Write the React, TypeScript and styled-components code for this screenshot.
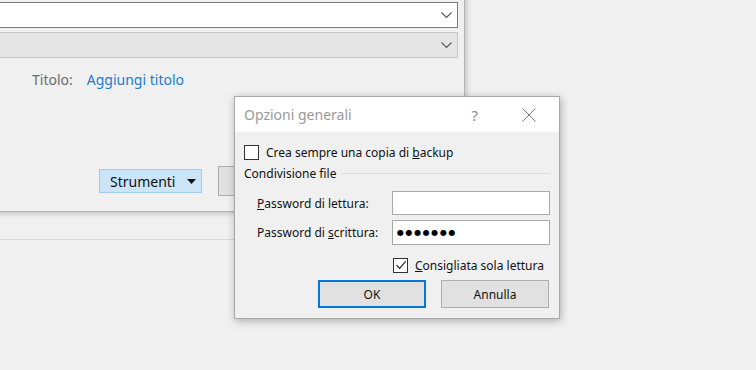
import styled, { createGlobalStyle } from 'styled-components';

const GlobalStyle = createGlobalStyle`
  html, body {
    margin: 0;
    padding: 0;
    background: #f0f0f0;
    font-family: 'Noto Sans', 'Open Sans', sans-serif;
  }
`;

const Chevron = () => (
  <svg width="11" height="7" viewBox="0 0 11 7">
    <polyline points="0.5,0.5 5.5,5.5 10.5,0.5" fill="none" stroke="#555" strokeWidth="1.1" />
  </svg>
);

const Caret = () => (
  <svg width="9" height="5" viewBox="0 0 9 5">
    <polygon points="0,0 9,0 4.5,5" fill="#111" />
  </svg>
);

const CloseIcon = () => (
  <svg width="14" height="14" viewBox="0 0 14 14">
    <path d="M0.5 0.5 L13.5 13.5 M13.5 0.5 L0.5 13.5" stroke="#777" strokeWidth="1" />
  </svg>
);

const Tick = () => (
  <svg width="12" height="12" viewBox="0 0 12 12">
    <polyline points="1.5,6.2 4.6,9.3 10.6,2.4" fill="none" stroke="#222" strokeWidth="1.2" />
  </svg>
);

const App = () => {
  return (
    <>
      <GlobalStyle />
      <Desktop>
        <Separator />

        <BackWindow>
          <Combo $tone="white">
            <Chevron />
          </Combo>
          <Combo $tone="grey">
            <Chevron />
          </Combo>
          <TitleRow>
            <FieldLabel>Titolo:</FieldLabel>
            <LinkText>Aggiungi titolo</LinkText>
          </TitleRow>
          <ButtonRow>
            <ToolsButton>
              <span>Strumenti</span>
              <Caret />
            </ToolsButton>
            <GreyButton />
          </ButtonRow>
        </BackWindow>

        <Dialog>
          <TitleBar>
            <DialogTitle>Opzioni generali</DialogTitle>
            <HelpMark>?</HelpMark>
            <CloseBox>
              <CloseIcon />
            </CloseBox>
          </TitleBar>
          <Body>
            <CheckRow>
              <Box />
              <span>
                Crea sempre una copia di <u>b</u>ackup
              </span>
            </CheckRow>
            <SectionHead>
              <span>Condivisione file</span>
              <Rule />
            </SectionHead>
            <FieldGrid>
              <span>
                <u>P</u>assword di lettura:
              </span>
              <TextBox />
              <span>
                Password di <u>s</u>crittura:
              </span>
              <TextBox $tall>
                <Dots>●●●●●●●</Dots>
              </TextBox>
            </FieldGrid>
            <CheckRow $indent={149} $top={12}>
              <Box>
                <Tick />
              </Box>
              <span>
                <u>C</u>onsigliata sola lettura
              </span>
            </CheckRow>
            <Actions>
              <DialogButton $primary>OK</DialogButton>
              <DialogButton>Annulla</DialogButton>
            </Actions>
          </Body>
        </Dialog>
      </Desktop>
    </>
  );
};

export default App;

const Desktop = styled.div`
  position: relative;
  width: 756px;
  height: 370px;
  overflow: hidden;
  background: #f0f0f0;
`;

const Separator = styled.div`
  margin-top: 239px;
  width: 480px;
  height: 1px;
  background: #d7d7d7;
`;

const BackWindow = styled.div`
  position: absolute;
  left: -20px;
  top: -20px;
  width: 485px;
  height: 232px;
  box-sizing: border-box;
  padding: 22px 6px 0 10px;
  background: #f0f0f0;
  border-right: 1px solid #b4b4b4;
  border-bottom: 1px solid #b4b4b4;
  box-shadow: 2px 2px 5px rgba(0, 0, 0, 0.18);
  display: flex;
  flex-direction: column;
`;

const Combo = styled.div<{ $tone: 'white' | 'grey' }>`
  height: 26px;
  box-sizing: border-box;
  margin-bottom: 4px;
  display: flex;
  align-items: center;
  justify-content: flex-end;
  padding-right: 5px;
  background: ${(p) => (p.$tone === 'white' ? '#ffffff' : '#e5e5e5')};
  border: 1px solid ${(p) => (p.$tone === 'white' ? '#7a7a7a' : '#c6c6c6')};
`;

const TitleRow = styled.div`
  margin-top: 8px;
  padding-left: 42px;
  display: flex;
  gap: 14px;
  font-size: 14px;
  line-height: 20px;
`;

const FieldLabel = styled.span`
  color: #6d6d6d;
`;

const LinkText = styled.span`
  color: #1f7bd1;
`;

const ButtonRow = styled.div`
  margin-top: 76px;
  padding-left: 109px;
  display: flex;
  align-items: center;
  gap: 16px;
`;

const ToolsButton = styled.div`
  width: 103px;
  height: 24px;
  box-sizing: border-box;
  padding: 0 5px 0 10px;
  display: flex;
  align-items: center;
  justify-content: space-between;
  background: #cce4f7;
  border: 1px solid #9fcbf0;
  font-size: 14px;
  color: #111;
`;

const GreyButton = styled.div`
  width: 100px;
  height: 30px;
  box-sizing: border-box;
  background: #e1e1e1;
  border: 1px solid #adadad;
`;

const Dialog = styled.div`
  position: absolute;
  left: 234px;
  top: 96px;
  width: 326px;
  height: 223px;
  box-sizing: border-box;
  background: #f0f0f0;
  border: 1px solid #a8a8a8;
  box-shadow: 1px 2px 8px rgba(0, 0, 0, 0.28);
  font-size: 12px;
  color: #111;
`;

const TitleBar = styled.div`
  height: 35px;
  background: #ffffff;
  display: flex;
  align-items: center;
  padding-left: 9px;
`;

const DialogTitle = styled.span`
  font-size: 14px;
  color: #9a9a9a;
`;

const HelpMark = styled.span`
  margin-left: auto;
  font-size: 15px;
  color: #8a8a8a;
`;

const CloseBox = styled.div`
  width: 14px;
  height: 14px;
  margin: 0 23px 0 44px;
  display: flex;
`;

const Body = styled.div`
  padding: 12px 9px 0 9px;
  display: flex;
  flex-direction: column;
`;

const CheckRow = styled.div<{ $indent?: number; $top?: number }>`
  margin-left: ${(p) => p.$indent ?? 0}px;
  margin-top: ${(p) => p.$top ?? 0}px;
  display: flex;
  align-items: center;
  gap: 7px;
  height: 16px;
`;

const Box = styled.div`
  width: 15px;
  height: 15px;
  box-sizing: border-box;
  border: 1px solid #333;
  background: #fff;
  display: flex;
  align-items: center;
  justify-content: center;
`;

const SectionHead = styled.div`
  margin-top: 4px;
  height: 18px;
  display: flex;
  align-items: center;
  gap: 5px;
`;

const Rule = styled.div`
  flex: 1;
  height: 1px;
  background: #dcdcdc;
`;

const FieldGrid = styled.div`
  margin-top: 9px;
  padding-left: 13px;
  display: grid;
  grid-template-columns: 135px 158px;
  row-gap: 5px;
  align-items: center;
`;

const TextBox = styled.div<{ $tall?: boolean }>`
  height: ${(p) => (p.$tall ? 25 : 24)}px;
  box-sizing: border-box;
  background: #fff;
  border: 1px solid #a9a9a9;
  display: flex;
  align-items: center;
  padding-left: 4px;
`;

const Dots = styled.span`
  font-family: 'DejaVu Sans', sans-serif;
  font-size: 8px;
  letter-spacing: 1.6px;
  color: #000;
`;

const Actions = styled.div`
  margin-top: 7px;
  display: flex;
  justify-content: flex-end;
  gap: 15px;
  padding-right: 1px;
`;

const DialogButton = styled.div<{ $primary?: boolean }>`
  width: 108px;
  height: 28px;
  box-sizing: border-box;
  display: flex;
  align-items: center;
  justify-content: center;
  background: #e1e1e1;
  border: 1px solid ${(p) => (p.$primary ? '#0078d7' : '#adadad')};
  box-shadow: ${(p) => (p.$primary ? 'inset 0 0 0 1px #0078d7' : 'none')};
  font-size: 12px;
  color: #111;
`;
